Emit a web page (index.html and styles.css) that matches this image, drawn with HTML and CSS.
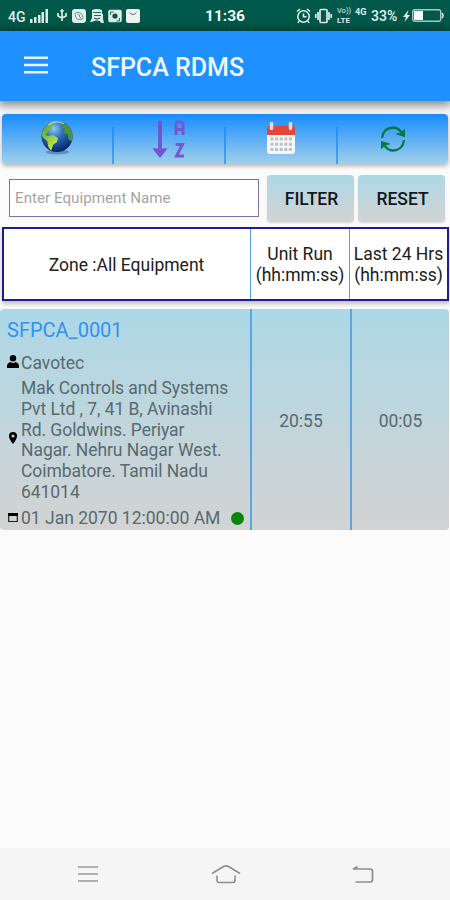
FILE: index.html
```html
<!DOCTYPE html>
<html lang="en">
<head>
<meta charset="utf-8">
<title>SFPCA RDMS</title>
<link rel="stylesheet" href="styles.css">
</head>
<body>
<div class="screen">
  <div class="status">
    <div class="status-left">
      <span class="net">4G</span>
      <svg class="signal" width="18" height="14" viewBox="0 0 18 14" fill="#dcece7"><path d="M0 10h2.500v4H0zM4 8h2.500v6H4zM8 6h2.500v8H8zM11.500 3h2.500v11h-2.500zM15.500 0H18v14h-2.500z"/></svg>
      <svg width="12" height="13" viewBox="0 0 12 13" fill="none" stroke="#dcece7" stroke-width="1.700"><path d="M6 1v11M2 4v3l4 2 4-2V4M4.500 2.500 6 1l1.500 1.500"/></svg>
      <svg width="14" height="14" viewBox="0 0 14 14"><rect width="14" height="14" rx="3" fill="#e4efec"/><path d="M4 3.500h3.500q3.500 1.500 3.500 5 0 2-2 2H6Q3 9 3 5zM5.500 5.500l2 .5v2l1.500 1" fill="none" stroke="#6f978d" stroke-width="1"/></svg>
      <svg width="14" height="14" viewBox="0 0 14 14"><path d="M2 1q5-2 10 0v4h1v5l1 4h-3l-1-2H4l-2 1H0l2-4z" fill="#dcece7"/><path d="M3 3.500h8M4 6.500h7M4 9l3 1 3-1M5 12h3" stroke="#23695a" stroke-width="1.200" fill="none"/></svg>
      <svg width="14" height="14" viewBox="0 0 14 14"><rect x="1" y="1.500" width="12" height="11" rx="1" fill="#dcece7" stroke="#dcece7" stroke-width="1.600"/><path d="M2.500 6V3h3M11.500 9v3h-3" stroke="#29705f" fill="none"/><circle cx="7" cy="7" r="2.600" fill="#0a5547"/></svg>
      <svg width="14" height="14" viewBox="0 0 14 14"><rect width="14" height="14" rx="2" fill="#eef5f3"/><path d="M3.500 3.500q3.500 4 7 0" fill="none" stroke="#3b7567"/></svg>
    </div>
    <span class="clock">11:36</span>
    <div class="status-right">
      <svg width="15" height="16" viewBox="0 0 15 16" fill="none" stroke="#dcece7" stroke-width="1.600"><circle cx="7.500" cy="8.500" r="5.700"/><path d="M7.500 5.500v3.300h3M1 3.500 4 1M14 3.500 11 1M3 13l-1 2M12 13l1 2"/></svg>
      <svg width="17" height="16" viewBox="0 0 17 16" fill="none" stroke="#dcece7" stroke-width="1.700"><rect x="5" y="1.500" width="7" height="13" rx="1"/><path d="M3 4v8M.8 6v4M14 4v8M16.200 6v4"/></svg>
      <span class="lte"><span>Vo))</span><b>LTE</b></span>
      <span class="mini">4G</span>
      <span class="pct">33%</span>
      <svg class="bolt" width="7" height="12" viewBox="0 0 7 12" fill="#e8f2ef"><path d="M5.500 0 0 7h3L1.500 12 7 5H4z"/></svg>
      <svg width="32" height="13" viewBox="0 0 32 13"><rect x=".7" y=".7" width="28" height="11.600" rx="2" fill="none" stroke="#a9cbc3" stroke-width="1.400"/><rect x="2" y="2" width="9" height="9" fill="#fff"/><path d="M30 4q2 2.500 0 5" stroke="#dcece7" stroke-width="1.500" fill="none"/></svg>
    </div>
  </div>

  <header class="appbar">
    <svg width="24" height="18" viewBox="0 0 24 18" stroke="#e6f3ff" stroke-width="2.400"><path d="M0 1.700h24M0 9h24M0 16.300h24"/></svg>
    <h1>SFPCA RDMS</h1>
  </header>

  <nav class="tools">
    <a class="tool globe">
      <svg width="34" height="36" viewBox="0 0 34 37">
        <defs><radialGradient id="sea" cx=".4" cy=".25" r=".75"><stop offset="0" stop-color="#8fc9ef"/><stop offset=".4" stop-color="#2b72bb"/><stop offset="1" stop-color="#07246a"/></radialGradient>
        <linearGradient id="land" x2=".5" y2="1"><stop stop-color="#4d9b2a"/><stop offset="1" stop-color="#c0e54d"/></linearGradient></defs>
        <ellipse cx="17.500" cy="33" rx="12" ry="2.500" fill="#315f78" opacity=".5"/>
        <circle cx="17" cy="17" r="16" fill="url(#sea)"/>
        <path d="M1.500 14Q4 4 15 1.500l-1 3-4 2 1 2-4 4-2 3 3 1 5-1 5 3-1 4-4 3-2 6-3-4-1-6-5-4z" fill="url(#land)"/>
        <path d="M21 1.800q10 3 12 13.200l-1 7-3-2-1-5-4-2 1-4-4-2 3-2z" fill="#4c9636"/>
        <path d="M8 5Q16-1 24 4" fill="none" stroke="#d8efd0" stroke-width="1.500" opacity=".6"/>
      </svg>
    </a>
    <a class="tool sort">
      <svg width="34" height="39" viewBox="0 0 34 39"><g fill="none" stroke="#7659cf" stroke-width="3"><path d="M24 15V4q0-2 2-2h3q2 0 2 2v11M24 9.500h7"/><path d="M23.500 24.500h7l-6 11.500h7.500"/></g><path d="M8 1v29" stroke="#7057d1" stroke-width="4"/><path d="M.5 28.500 4 28l4 2 4-2 3.500.5L8 38z" fill="#7057d1"/></svg>
    </a>
    <a class="tool cal">
      <svg width="30" height="33" viewBox="0 0 30 33"><rect x="1" y="4" width="28" height="28" rx="3" fill="#f6f7f8"/><path d="M1 13V6q0-2.500 2.500-2.500h23Q29 3.500 29 6v7z" fill="#e34738"/><path d="M5.500 1.500v5M24.500 1.500v5" stroke="#d6dce3" stroke-width="3.500" stroke-linecap="round"/><g stroke="#bcc0c5" stroke-width="3" stroke-dasharray="3 1.600"><path d="M4.500 17h21.500M4.500 22.200h21.500M4.500 27.400h21.500"/></g></svg>
    </a>
    <a class="tool sync">
      <svg width="26" height="28" viewBox="0 0 26 28"><g fill="none" stroke="#08784b" stroke-width="2.300"><path d="M2 13Q3 3 13 2.500q5 0 8.500 5"/><path d="M24 15q-1 10-11 10.500-5 0-8.500-5"/></g><path d="M24.500 4.500v7l-8-2.500 4-.8zM1.500 23.500v-7l8 2.500-4 .8z" fill="#08784b" stroke="#08784b"/></svg>
    </a>
  </nav>

  <form class="search">
    <input type="text" placeholder="Enter Equipment Name">
    <button type="button">FILTER</button>
    <button type="button">RESET</button>
  </form>

  <div class="head">
    <div class="zone">Zone :All Equipment</div>
    <div>Unit Run<br>(hh:mm:ss)</div>
    <div>Last 24 Hrs<br>(hh:mm:ss)</div>
  </div>

  <article class="card">
    <div class="info">
      <h2>SFPCA_0001</h2>
      <div class="line owner"><svg width="12" height="13" viewBox="0 0 12 13"><circle cx="6" cy="3.300" r="3.200"/><path d="M0 13v-2q0-3 3.500-4Q6 9 8.500 7 12 8 12 11v2z"/></svg><span>Cavotec</span></div>
      <div class="line place"><svg width="12" height="12" viewBox="0 0 12 12"><path fill-rule="evenodd" d="M6 0a4 4 0 0 1 4 4q0 3-4 8-4-5-4-8a4 4 0 0 1 4-4zm0 2.500a1.500 1.500 0 1 0 0 3 1.500 1.500 0 0 0 0-3z"/></svg><span>Mak Controls and Systems<br>Pvt Ltd , 7, 41 B, Avinashi<br>Rd. Goldwins. Periyar<br>Nagar. Nehru Nagar West.<br>Coimbatore. Tamil Nadu<br>641014</span></div>
      <div class="line date"><svg width="12" height="11" viewBox="0 0 12 11"><path d="M1.700 2.500h8.600v7H1.700z" fill="none" stroke="#222" stroke-width="1.200"/><path d="M1 1h10v3H1zM3 0v2M9 0v2"/></svg><span>01 Jan 2070 12:00:00 AM</span><i class="dot"></i></div>
    </div>
    <div class="time">20:55</div>
    <div class="time">00:05</div>
  </article>

  <footer class="nav">
    <svg width="22" height="18" viewBox="0 0 22 18" stroke="#989898" stroke-width="1.700"><path d="M1 2h20M1 9h20M1 16h20"/></svg>
    <svg width="30" height="20" viewBox="0 0 30 20" fill="none" stroke="#8e8e8e" stroke-width="1.600"><path d="M1 9.500 12.500 2.500q2.500-1.200 5 0L29 9.500M6 11.500V16q0 2.500 2 2.500h14q2 0 2-2.500v-4.500"/></svg>
    <svg width="22" height="18" viewBox="0 0 22 18" fill="none" stroke="#8e8e8e" stroke-width="1.700"><path d="M1 4h17q2.500 0 2.500 2.500v8q0 2.500-2.500 2.500H3.500"/><path d="M0 4 5.500.5V4z" fill="#8e8e8e" stroke="none"/></svg>
  </footer>
</div>
</body>
</html>
```
FILE: styles.css
```css
* { box-sizing: border-box; }
body { margin: 0; font-family: Roboto, "Liberation Sans", sans-serif; background: #fafafa; }
svg { display: block; flex: none; }
.screen { width: 450px; height: 900px; display: flex; flex-direction: column; overflow: hidden; background: #fbfbfb; }

.status { height: 31px; flex: none; display: grid; grid-template-columns: 197px 56px 1fr; align-items: center; background: #00594a; color: #e4efec; }
.status-left { display: flex; align-items: center; gap: 4px; padding-left: 8px; }
.net { width: 18px; font-size: 14px; font-weight: 500; white-space: nowrap; padding-top: 2px; }
.signal { margin: 0 4px 0 0; }
.clock { text-align: center; font-size: 15.500px; font-weight: 700; color: #f1f8f6; padding-top: 1px; }
.status-right { display: flex; align-items: center; justify-content: flex-end; padding-right: 6px; }
.status-right svg:nth-child(2) { margin: 0 5px 0 4px; }
.lte { display: flex; flex-direction: column; width: 18px; font-size: 7.500px; line-height: 10px; }
.lte b { font-size: 8px; }
.mini { font-size: 9px; font-weight: 700; width: 16px; line-height: 9px; padding-bottom: 6px; box-sizing: content-box; }
.pct { font-size: 14px; font-weight: 500; width: 30px; }
.bolt { margin: 0 2px; }

.appbar { height: 70px; flex: none; display: flex; align-items: center; gap: 43px; padding: 2px 0 0 24px; background: #1e90ff; box-shadow: 0 2px 10px 2px rgba(0,0,0,.5); position: relative; }
.appbar svg { margin-bottom: 4px; }
h1 { margin: 0; font-size: 25px; font-weight: 500; color: #f2f9ff; }

.tools { height: 50px; flex: none; margin: 13px 2px 0; display: grid; grid-template-columns: 112px 112px 112px 1fr; border-radius: 4px; background: linear-gradient(#1e90ff 5%, #a2d0ea); box-shadow: 0 2px 4px rgba(0,0,0,.3); }
.tool { display: flex; justify-content: center; align-items: center; background: linear-gradient(#1e90ff, #4a9fe8) right bottom / 2px 37px no-repeat; }
.tool:last-child { background: none; }
.globe svg { margin: 0 2px 2px 0; }
.sort svg { margin-right: 2px; }
.cal svg { margin: 0 2px 2px 0; }

.search { display: flex; flex: none; align-items: center; height: 63px; padding: 6px 4px 0 9px; }
.search input { width: 250px; height: 38px; margin: 0 8px 2px 0; padding: 0 5px; border: 1px solid #7474a8; border-radius: 0; background: #fff; font: 15.200px Roboto, sans-serif; outline: none; }
.search input::placeholder { color: #a5a5a5; opacity: 1; }
.search button { width: 87px; height: 47px; padding: 0 0 0 2px; border: 0; border-radius: 4px; background: linear-gradient(#add8e6, #d3d3d3); color: #10181c; font: 500 17.500px Roboto, sans-serif; box-shadow: 0 1px 2px rgba(0,0,0,.15); }
.search button + button { margin-left: 4px; }

.head { height: 74px; flex: none; margin: 0 1px 0 2px; display: grid; grid-template-columns: 246px 99px 1fr; border: 2px solid #1c1c96; background: #fff; box-shadow: 0 3px 4px rgba(100,80,80,.35); font-size: 17.500px; line-height: 20.500px; color: #202020; }
.head > div { display: flex; align-items: center; justify-content: center; text-align: center; white-space: nowrap; padding-top: 1px; }
.head > div + div { border-left: 1px solid #52a0e4; }
.head .zone { padding: 2px 1px 0 0; }

.card { height: 221px; flex: none; margin: 8px 1px 0 0; display: grid; grid-template-columns: 250px 100px 1fr; border-radius: 4px; background: linear-gradient(#add8e6, #d3d3d3); color: #586a70; font-size: 17.500px; line-height: 20.700px; }
.info { padding: 9px 0 0 7px; white-space: nowrap; }
h2 { margin: 0; font-size: 20px; line-height: 24px; font-weight: 400; color: #2f92f3; }
.line { display: flex; align-items: center; gap: 2px; }
.owner { margin-top: 10.500px; }
.owner svg { margin-bottom: 2px; }
.place { margin-top: 5px; letter-spacing: -.06px; }
.place svg { margin-bottom: 4px; }
.date { margin-top: 5.500px; }
.date svg { margin-bottom: 1px; }
.dot { width: 13px; height: 13px; border-radius: 50%; background: #078707; margin-left: auto; margin-right: 6px; }
.time { display: flex; align-items: center; justify-content: center; padding-top: 3px; border-left: 2px solid #58a5e8; }

.nav { margin-top: auto; height: 52px; flex: none; display: flex; align-items: center; justify-content: space-between; padding: 0 76px 0 77px; background: #f5f5f5; }
```
